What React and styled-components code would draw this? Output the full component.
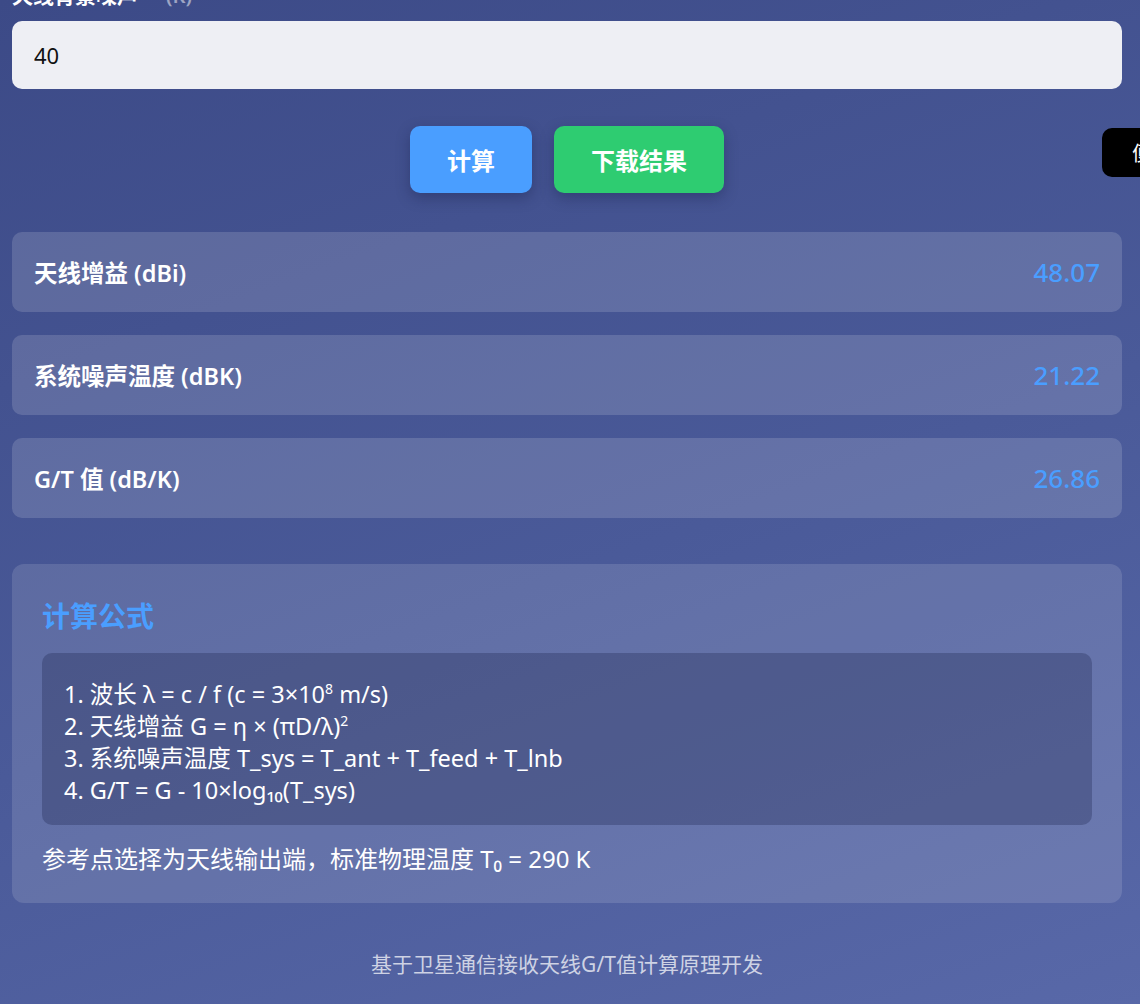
import React from 'react';
import styled, { createGlobalStyle } from 'styled-components';

const GlobalStyle = createGlobalStyle`
  html, body {
    margin: 0;
    padding: 0;
    overflow: hidden;
  }
  body {
    min-height: 1004px;
    background: linear-gradient(160deg, #3c4a87 0%, #4a5a99 55%, #5868a8 100%);
    font-family: "Noto Sans", "Noto Sans CJK SC", sans-serif;
    color: #fff;
  }
`;

const Page = styled.div`
  width: 1110px;
  padding: 0 18px 0 12px;
  margin-top: -21px;
`;

const Field = styled.div`
  display: flex;
  flex-direction: column;
  gap: 9px;
`;

const Label = styled.label`
  font-size: 21px;
  font-weight: 700;
  line-height: 32px;
  color: #fff;
`;

const Unit = styled.span`
  margin-left: 28px;
  color: rgba(255, 255, 255, 0.5);
  font-weight: 600;
  font-size: 20px;
`;

const Input = styled.input`
  height: 68px;
  box-sizing: border-box;
  border: none;
  border-radius: 10px;
  background: #eeeff4;
  padding: 0 22px;
  font-family: inherit;
  font-size: 22px;
  color: #111;
  outline: none;
`;

const Actions = styled.div`
  display: flex;
  justify-content: center;
  gap: 22px;
  margin-top: 37px;
`;

const Button = styled.button`
  height: 67px;
  padding: 0 37px;
  border: none;
  border-radius: 10px;
  background: ${(p) => p.$bg};
  color: #fff;
  font-family: inherit;
  font-size: 24px;
  font-weight: 700;
  box-shadow: 0 5px 14px rgba(20, 28, 70, 0.35);
  cursor: pointer;
`;

const Results = styled.div`
  display: flex;
  flex-direction: column;
  gap: 23px;
  margin-top: 39px;
`;

const ResultRow = styled.div`
  height: 80px;
  display: flex;
  align-items: center;
  justify-content: space-between;
  padding: 0 22px;
  border-radius: 10px;
  background: rgba(255, 255, 255, 0.15);
`;

const ResultLabel = styled.span`
  font-size: 23.5px;
  font-weight: 600;
`;

const ResultValue = styled.span`
  font-size: 26px;
  font-weight: 500;
  color: #4a9eff;
`;

const FormulaCard = styled.section`
  margin-top: 46px;
  padding: 32px 30px 28px;
  border-radius: 12px;
  background: rgba(255, 255, 255, 0.13);
`;

const FormulaTitle = styled.h3`
  margin: 0;
  font-size: 28px;
  font-weight: 700;
  line-height: 40px;
  color: #4a9eff;
`;

const FormulaBox = styled.div`
  margin-top: 17px;
  padding: 25px 22px 19px;
  border-radius: 10px;
  background: rgba(20, 28, 70, 0.28);
  font-size: 23.5px;
  line-height: 32px;
`;

const Sup = styled.sup`
  font-size: 14px;
  line-height: 0;
  vertical-align: 9px;
`;

const Note = styled.p`
  margin: 18px 0 0;
  font-size: 24px;
  line-height: 32px;
`;

const Footer = styled.footer`
  margin-top: 45px;
  text-align: center;
  font-size: 21px;
  color: rgba(255, 255, 255, 0.72);
`;

const Toast = styled.div`
  position: fixed;
  left: 1102px;
  top: 128px;
  height: 49px;
  display: flex;
  align-items: center;
  padding: 0 22px 0 30px;
  border-radius: 10px;
  background: #000;
  color: #fff;
  font-size: 20px;
  white-space: nowrap;
`;

const results = [
  { label: '天线增益 (dBi)', value: '48.07' },
  { label: '系统噪声温度 (dBK)', value: '21.22' },
  { label: 'G/T 值 (dB/K)', value: '26.86' },
];

export default function App() {
  return (
    <>
      <GlobalStyle />
      <Page>
        <Field>
          <Label>
            天线背景噪声<Unit>(K)</Unit>
          </Label>
          <Input defaultValue="40" />
        </Field>
        <Actions>
          <Button $bg="#4a9eff">计算</Button>
          <Button $bg="#2ecc71">下载结果</Button>
        </Actions>
        <Results>
          {results.map((r) => (
            <ResultRow key={r.label}>
              <ResultLabel>{r.label}</ResultLabel>
              <ResultValue>{r.value}</ResultValue>
            </ResultRow>
          ))}
        </Results>
        <FormulaCard>
          <FormulaTitle>计算公式</FormulaTitle>
          <FormulaBox>
            1. 波长 λ = c / f (c = 3×10<Sup>8</Sup> m/s)
            <br />
            2. 天线增益 G = η × (πD/λ)<Sup>2</Sup>
            <br />
            3. 系统噪声温度 T_sys = T_ant + T_feed + T_lnb
            <br />
            4. G/T = G - 10×log₁₀(T_sys)
          </FormulaBox>
          <Note>参考点选择为天线输出端，标准物理温度 T₀ = 290 K</Note>
        </FormulaCard>
        <Footer>基于卫星通信接收天线G/T值计算原理开发</Footer>
      </Page>
      <Toast>便携模式已开启</Toast>
    </>
  );
}
